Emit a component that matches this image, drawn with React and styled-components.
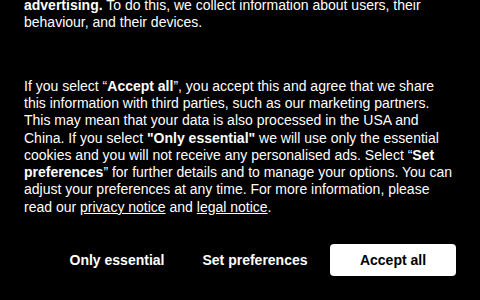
import React from "react";
import styled, { createGlobalStyle } from "styled-components";

const Global = createGlobalStyle`
  html, body { margin: 0; padding: 0; background: #000; }
  body { font-family: "Liberation Sans", Arial, sans-serif; }
`;

const Banner = styled.div`
  height: 300px;
  box-sizing: border-box;
  overflow: hidden;
  background: #000;
  color: #fff;
  display: flex;
  flex-direction: column;
  justify-content: flex-end;
  padding: 0 24px 24px;
`;

const Text = styled.p`
  margin: 0;
  font-size: 14px;
  line-height: 17.3px;
  flex-shrink: 0;
  & + & { margin-top: 46px; }
  b { font-weight: 700; }
  a { color: #fff; text-decoration: underline; }
`;

const Actions = styled.div`
  display: flex;
  justify-content: flex-end;
  gap: 12px;
  margin-top: 28px;
  flex-shrink: 0;
`;

const Button = styled.button`
  width: 126px;
  height: 32px;
  border: none;
  border-radius: 4px;
  font-family: "Liberation Sans", Arial, sans-serif;
  font-size: 14px;
  font-weight: 700;
  cursor: pointer;
  background: ${(p) => (p.$primary ? "#fff" : "transparent")};
  color: ${(p) => (p.$primary ? "#000" : "#fff")};
`;

export default function App() {
  return (
    <>
      <Global />
      <Banner>
        <Text>
          We use cookies and similar technologies to make our website work, for analytics and for <b>personalised</b>
          <br />
          <b>advertising.</b> To do this, we collect information about users, their behaviour, and their devices.
        </Text>
        <Text>
          If you select “<b>Accept all</b>”, you accept this and agree that we share this information with third
          parties, such as our marketing partners. This may mean that your data is also processed in the USA and
          China. If you select <b>"Only essential"</b> we will use only the essential cookies and you will not
          receive any personalised ads. Select “<b>Set preferences</b>” for further details and to manage your
          options. You can adjust your preferences at any time. For more information, please read our{" "}
          <a href="#privacy">privacy notice</a> and <a href="#legal">legal notice</a>.
        </Text>
        <Actions>
          <Button>Only essential</Button>
          <Button>Set preferences</Button>
          <Button $primary>Accept all</Button>
        </Actions>
      </Banner>
    </>
  );
}
